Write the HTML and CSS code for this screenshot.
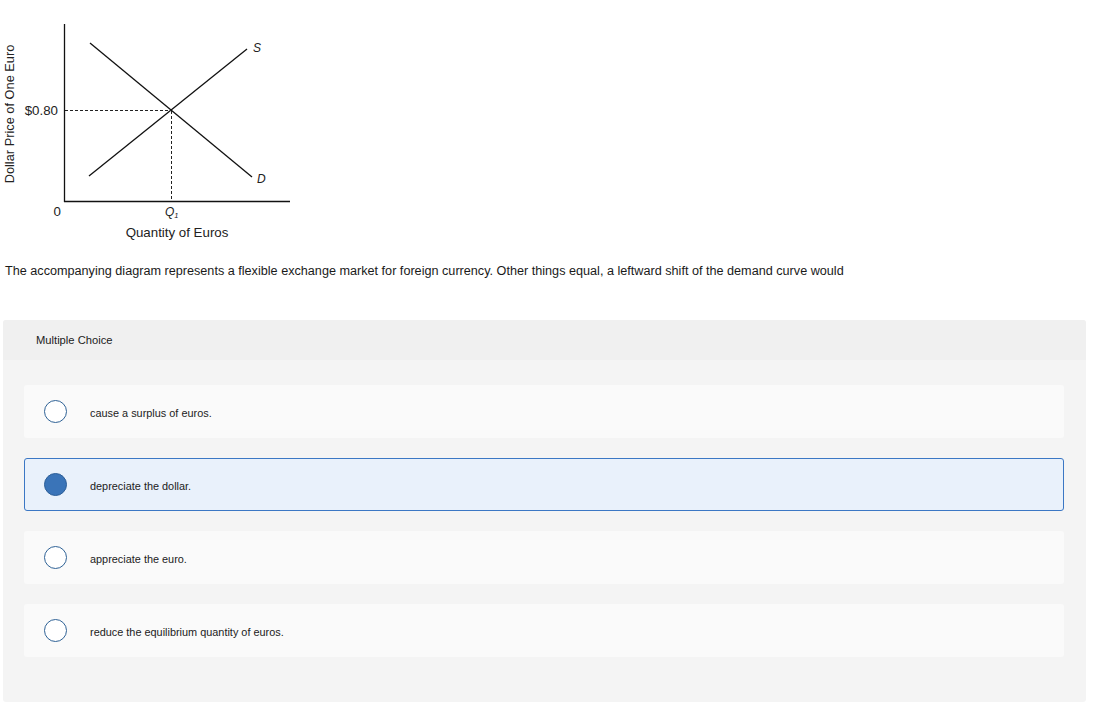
FILE: index.html
```html
<!DOCTYPE html>
<html>
<head>
<meta charset="utf-8">
<link rel="stylesheet" href="styles.css">
</head>
<body>
<div class="figure">
  <svg class="chart" width="300" height="250" viewBox="0 0 300 250" xmlns="http://www.w3.org/2000/svg">
    <g stroke="#111" stroke-width="1.3" fill="none">
      <line x1="64.5" y1="24" x2="64.5" y2="202"/>
      <line x1="64" y1="201.5" x2="290" y2="201.5"/>
      <line x1="90" y1="43" x2="252" y2="177"/>
      <line x1="89" y1="176" x2="247" y2="49"/>
    </g>
    <g stroke="#222" stroke-width="1" stroke-dasharray="3,2" fill="none">
      <line x1="65" y1="110.5" x2="171" y2="110.5"/>
      <line x1="171.5" y1="111" x2="171.5" y2="201"/>
    </g>
    <g class="chart-text">
      <text x="0" y="0" transform="translate(14,114) rotate(-90)" text-anchor="middle" class="axis-title">Dollar Price of One Euro</text>
      <text x="58" y="115" text-anchor="end" class="big">$0.80</text>
      <text x="61" y="216" text-anchor="end" class="big">0</text>
      <text x="177" y="237" text-anchor="middle" class="big">Quantity of Euros</text>
      <text x="165" y="216" font-style="italic">Q<tspan font-size="7.5" dy="2">1</tspan></text>
      <text x="253" y="52" font-style="italic">S</text>
      <text x="257" y="183" font-style="italic">D</text>
    </g>
  </svg>
</div>
<p class="question">The accompanying diagram represents a flexible exchange market for foreign currency. Other things equal, a leftward shift of the demand curve would</p>
<div class="panel">
  <div class="panel-head">Multiple Choice</div>
  <div class="panel-body">
    <div class="option"><span class="radio"></span><span class="opt-text">cause a surplus of euros.</span></div>
    <div class="option selected"><span class="radio"></span><span class="opt-text">depreciate the dollar.</span></div>
    <div class="option"><span class="radio"></span><span class="opt-text">appreciate the euro.</span></div>
    <div class="option"><span class="radio"></span><span class="opt-text">reduce the equilibrium quantity of euros.</span></div>
  </div>
</div>
</body>
</html>
```
FILE: styles.css
```css
html, body {
  margin: 0;
  padding: 0;
  background: #ffffff;
  font-family: "Liberation Sans", Arial, sans-serif;
  color: #222;
}
.figure {
  height: 250px;
}
.chart {
  display: block;
}
.chart-text text {
  font-family: "Liberation Sans", Arial, sans-serif;
  font-size: 12px;
  fill: #222;
}
.chart-text .big {
  font-size: 13.3px;
}
.chart-text .axis-title {
  font-size: 12.8px;
}
.question {
  margin: 13px 0 0 5px;
  font-size: 12.65px;
  line-height: 16px;
  color: #1a1a1a;
}
.panel {
  margin: 41px 0 0 3px;
  width: 1083px;
  background: #f4f4f4;
  border-radius: 3px;
  overflow: hidden;
}
.panel-head {
  height: 40px;
  background: #f0f0f0;
  display: flex;
  align-items: center;
  padding-left: 33px;
  font-size: 11.2px;
  color: #222;
}
.panel-body {
  padding: 25px 22px 45px 21px;
  display: flex;
  flex-direction: column;
  gap: 20px;
}
.option {
  height: 53px;
  box-sizing: border-box;
  background: #fafafa;
  border-radius: 3px;
  display: flex;
  align-items: center;
  padding-left: 20px;
  border: 1px solid transparent;
}
.option.selected {
  background: #e9f1fb;
  border-color: #3b77c4;
}
.radio {
  width: 23px;
  height: 23px;
  box-sizing: border-box;
  border-radius: 50%;
  border: 1.5px solid #2f6296;
  background: #ffffff;
  flex: none;
  margin-left: -1px;
}
.option.selected .radio {
  background: #3a74b8;
  border-color: #2d5f98;
}
.opt-text {
  margin-left: 23px;
  font-size: 10.9px;
  color: #222;
  position: relative;
  top: 1px;
}
```
